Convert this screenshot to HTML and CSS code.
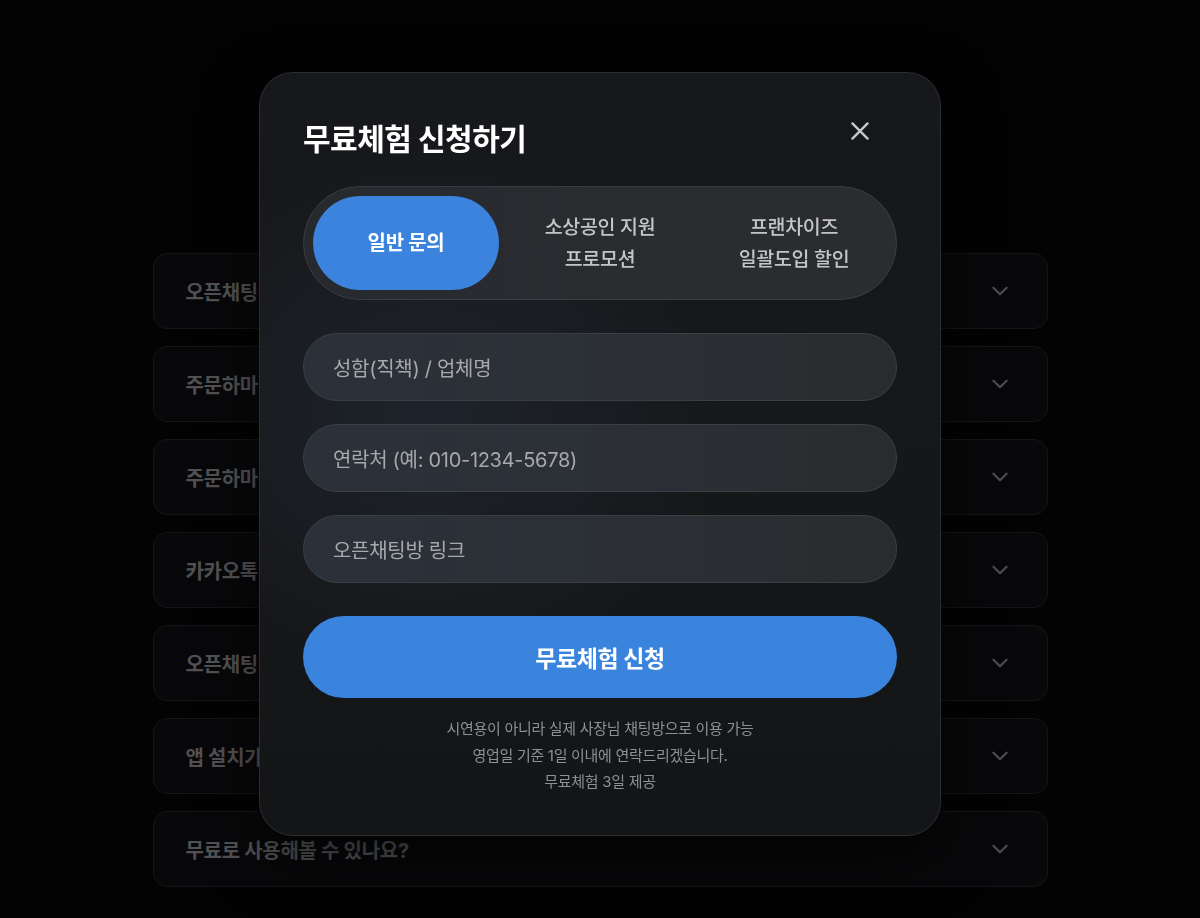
FILE: index.html
```html
<!DOCTYPE html>
<html lang="ko">
<head>
<meta charset="utf-8">
<title>무료체험 신청하기</title>
<link rel="stylesheet" href="styles.css">
</head>
<body>
<main class="page">
  <section class="faq">
    <div class="faq-item"><span class="faq-q">오픈채팅방</span><svg class="chev" viewBox="0 0 20 20"><path d="M4 7l6 6 6-6"/></svg></div>
    <div class="faq-item"><span class="faq-q">주문하마</span><svg class="chev" viewBox="0 0 20 20"><path d="M4 7l6 6 6-6"/></svg></div>
    <div class="faq-item"><span class="faq-q">주문하마</span><svg class="chev" viewBox="0 0 20 20"><path d="M4 7l6 6 6-6"/></svg></div>
    <div class="faq-item"><span class="faq-q">카카오톡</span><svg class="chev" viewBox="0 0 20 20"><path d="M4 7l6 6 6-6"/></svg></div>
    <div class="faq-item"><span class="faq-q">오픈채팅방</span><svg class="chev" viewBox="0 0 20 20"><path d="M4 7l6 6 6-6"/></svg></div>
    <div class="faq-item"><span class="faq-q">앱 설치가</span><svg class="chev" viewBox="0 0 20 20"><path d="M4 7l6 6 6-6"/></svg></div>
    <div class="faq-item"><span class="faq-q">무료로 사용해볼 수 있나요?</span><svg class="chev" viewBox="0 0 20 20"><path d="M4 7l6 6 6-6"/></svg></div>
  </section>
</main>

<div class="overlay">
  <div class="modal">
    <div class="modal-head">
      <h2 class="modal-title">무료체험 신청하기</h2>
      <button class="close" aria-label="닫기"><svg viewBox="0 0 24 24"><path d="M5 5l14 14M19 5L5 19"/></svg></button>
    </div>
    <div class="tabs">
      <div class="tab active">일반 문의</div>
      <div class="tab">소상공인 지원<br>프로모션</div>
      <div class="tab">프랜차이즈<br>일괄도입 할인</div>
    </div>
    <div class="fields">
      <div class="field">성함(직책) / 업체명</div>
      <div class="field">연락처 (예: 010-1234-5678)</div>
      <div class="field">오픈채팅방 링크</div>
    </div>
    <button class="submit">무료체험 신청</button>
    <p class="note">시연용이 아니라 실제 사장님 채팅방으로 이용 가능<br>영업일 기준 1일 이내에 연락드리겠습니다.<br>무료체험 3일 제공</p>
  </div>
</div>
</body>
</html>
```

FILE: styles.css
```css
* { box-sizing: border-box; }
html, body { margin: 0; padding: 0; }
body {
  background: #030304;
  font-family: "Inter", "Noto Sans CJK KR", "Noto Sans", sans-serif;
  color: #fff;
  width: 1200px;
  height: 918px;
  overflow: hidden;
}
.page {
  padding-top: 253px;
  display: flex;
  justify-content: center;
}
.faq {
  width: 895px;
  display: flex;
  flex-direction: column;
  gap: 17px;
}
.faq-item {
  height: 76px;
  border: 1px solid #151517;
  border-radius: 14px;
  background: #08080a;
  display: flex;
  align-items: center;
  justify-content: space-between;
  padding: 0 36px 0 32px;
}
.faq-q {
  font-size: 20px;
  font-weight: 700;
  color: #525254;
  letter-spacing: -0.3px;
}
.chev {
  width: 22px;
  height: 22px;
  fill: none;
  stroke: #4d4d4f;
  stroke-width: 2;
  stroke-linecap: round;
  stroke-linejoin: round;
}

.overlay {
  position: fixed;
  inset: 0;
  display: flex;
  justify-content: center;
  align-items: flex-start;
  padding-top: 72px;
}
.modal {
  width: 682px;
  height: 764px;
  border-radius: 34px;
  border: 1px solid #2b2d31;
  background:
    radial-gradient(ellipse 420px 380px at 25% 45%, rgba(36,46,58,0.55), rgba(36,46,58,0) 70%),
    linear-gradient(180deg, #17181b 0%, #161719 60%, #141517 100%);
  box-shadow: 0 20px 60px rgba(0,0,0,0.6);
  padding: 40px 43px 0 43px;
  display: flex;
  flex-direction: column;
}
.modal-head {
  display: flex;
  align-items: center;
  justify-content: space-between;
  height: 48px;
  margin-bottom: 25px;
}
.modal-title {
  margin: 0;
  font-size: 30px;
  font-weight: 700;
  letter-spacing: -0.5px;
  color: #fff;
}
.close {
  background: none;
  border: 0;
  padding: 0;
  width: 26px;
  height: 26px;
  margin-right: 24px;
  margin-bottom: 12px;
  cursor: pointer;
}
.close svg {
  width: 26px;
  height: 26px;
  fill: none;
  stroke: #c8c9cc;
  stroke-width: 2.2;
  stroke-linecap: round;
}
.tabs {
  height: 114px;
  border-radius: 57px;
  background: linear-gradient(90deg, #26292e 0%, #2a2c30 60%, #2b2c2f 100%);
  border: 1px solid #3a3c40;
  padding: 9px;
  display: grid;
  grid-template-columns: 186px 1fr 1fr;
  column-gap: 8px;
  align-items: center;
}
.tab {
  text-align: center;
  font-size: 19.5px;
  font-weight: 500;
  line-height: 32px;
  color: #c4c5c8;
  letter-spacing: -0.3px;
}
.tab.active {
  height: 94px;
  border-radius: 47px;
  background: #3b83dc;
  color: #fff;
  font-weight: 700;
  font-size: 20px;
  display: flex;
  align-items: center;
  justify-content: center;
}
.fields {
  margin-top: 33px;
  display: flex;
  flex-direction: column;
  gap: 23px;
}
.field {
  height: 68px;
  border-radius: 34px;
  background: linear-gradient(90deg, #2b3139 0%, #2c3037 45%, #2a2b2e 100%);
  border: 1px solid #3b3f45;
  padding: 0 29px;
  display: flex;
  align-items: center;
  font-size: 20px;
  color: #a6a8ac;
  letter-spacing: -0.3px;
}
.submit {
  margin-top: 33px;
  height: 82px;
  border: 0;
  border-radius: 41px;
  background: #3a84de;
  color: #fff;
  font-family: inherit;
  font-size: 23px;
  font-weight: 700;
  letter-spacing: -0.4px;
  cursor: pointer;
}
.note {
  margin: 18px 0 0;
  text-align: center;
  font-size: 15px;
  line-height: 26.5px;
  color: #8e9094;
  letter-spacing: -0.3px;
}
```
